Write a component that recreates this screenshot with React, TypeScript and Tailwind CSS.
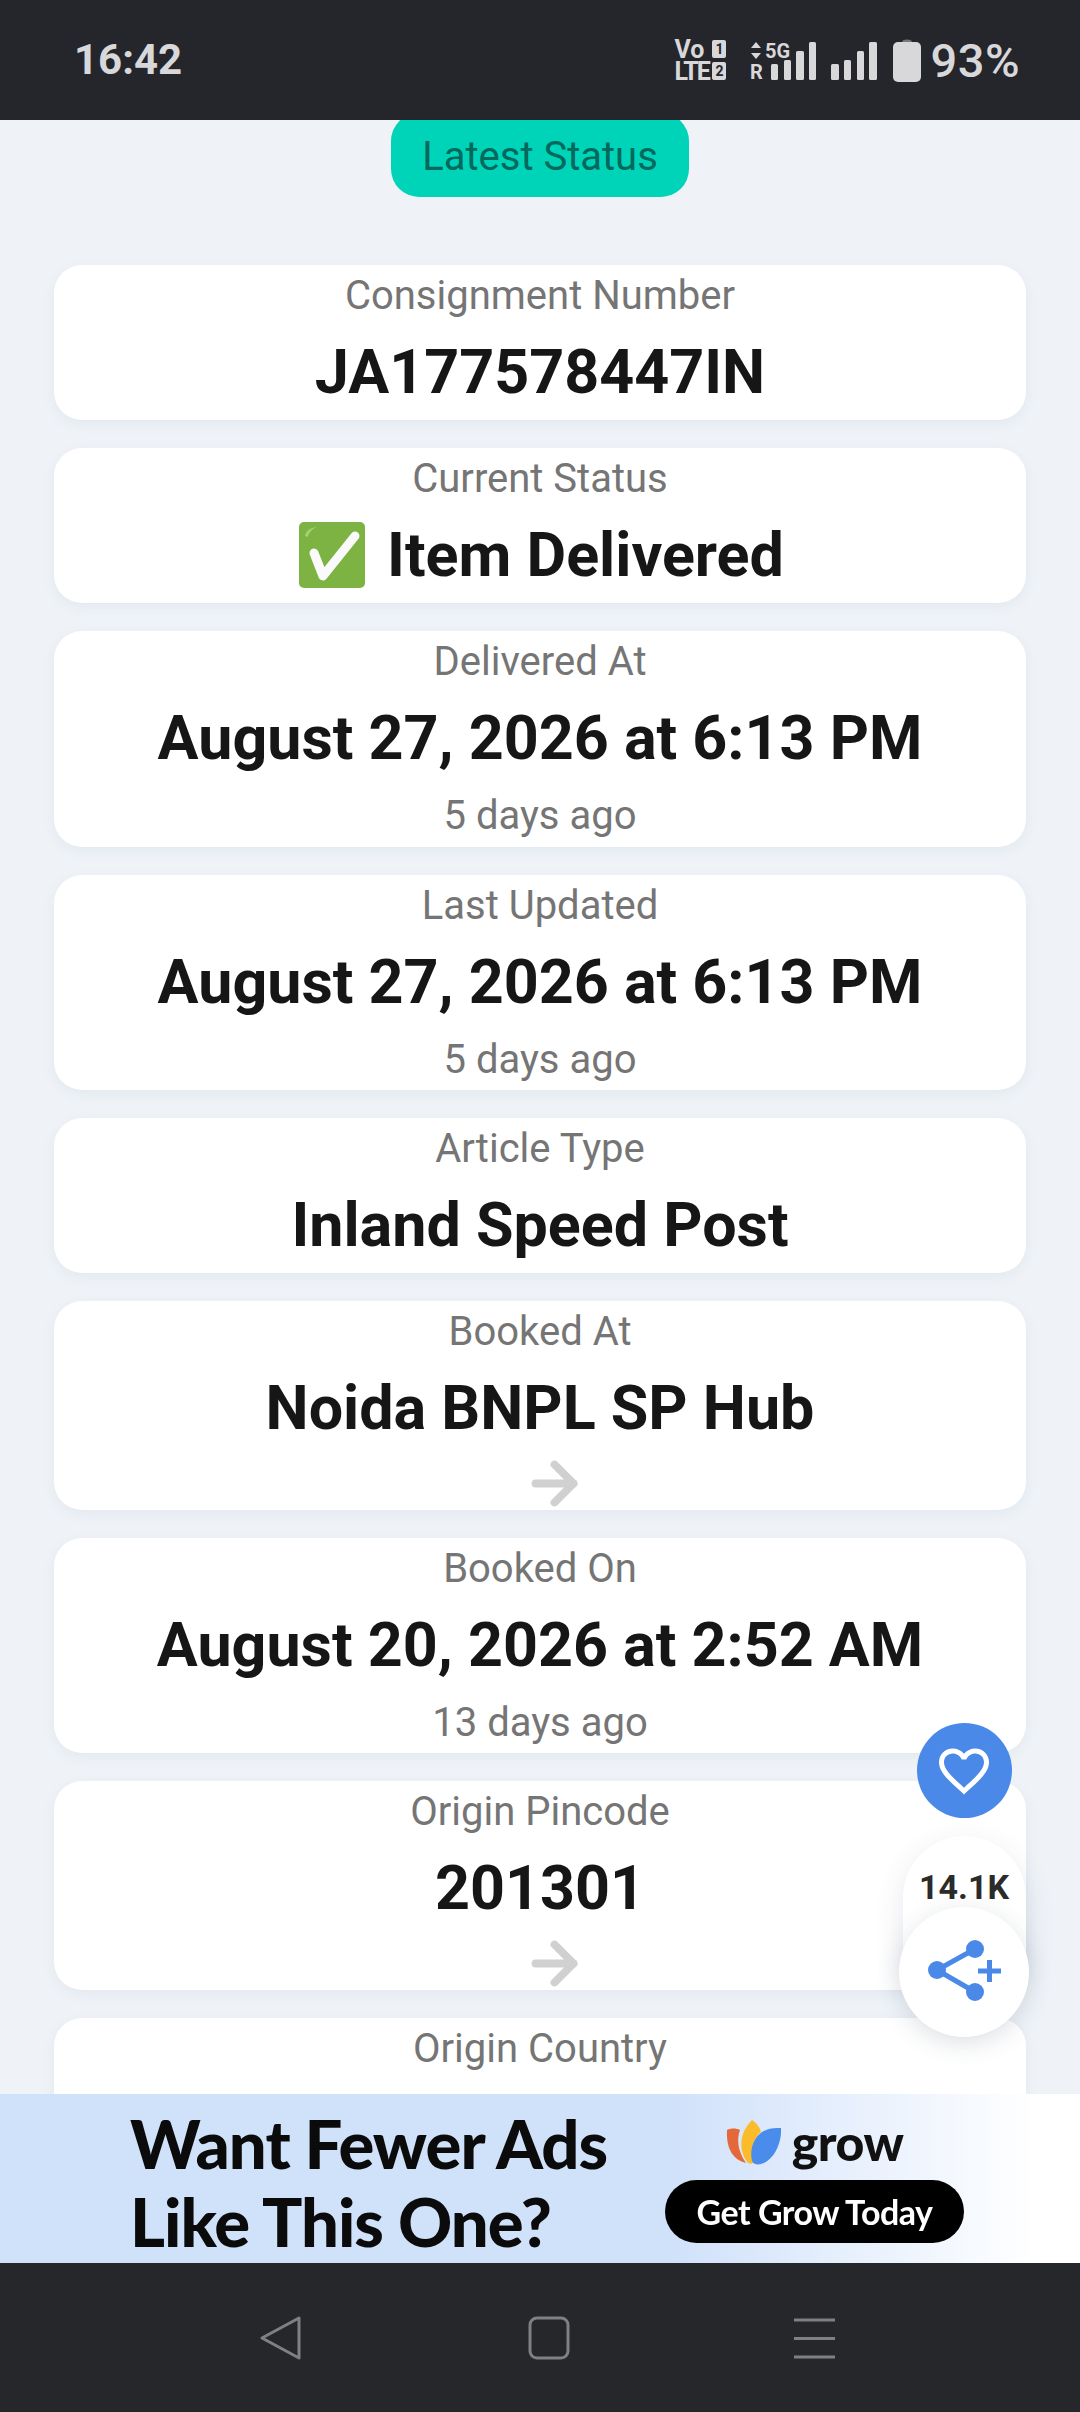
import { ArrowRight } from 'lucide-react';

type Row = { label: string; value?: string; sub?: string; arrow?: boolean; check?: boolean };

const rows: Row[] = [
  { label: 'Consignment Number', value: 'JA177578447IN' },
  { label: 'Current Status', value: 'Item Delivered', check: true },
  { label: 'Delivered At', value: 'August 27, 2026 at 6:13 PM', sub: '5 days ago' },
  { label: 'Last Updated', value: 'August 27, 2026 at 6:13 PM', sub: '5 days ago' },
  { label: 'Article Type', value: 'Inland Speed Post' },
  { label: 'Booked At', value: 'Noida BNPL SP Hub', arrow: true },
  { label: 'Booked On', value: 'August 20, 2026 at 2:52 AM', sub: '13 days ago' },
  { label: 'Origin Pincode', value: '201301', arrow: true },
  { label: 'Origin Country' },
];

function CheckEmoji() {
  return (
    <svg width="66" height="66" viewBox="0 0 66 66" className="ml-[3px] shrink-0">
      <rect width="66" height="66" rx="5" fill="#7cb342" />
      <path d="M6 14c1-5 4-8 12-9-5 2-8 5-9 10z" fill="#a5cf75" />
      <path d="M15 31l9 23L56 14" fill="none" stroke="#fafafa" strokeWidth="9" strokeLinecap="round" strokeLinejoin="round" />
    </svg>
  );
}

function Card({ row }: { row: Row }) {
  return (
    <div className="rounded-[28px] bg-white pt-[9px] text-center shadow-[0_4px_14px_rgba(40,60,90,0.06)]">
      <div className="text-[40px] leading-[44px] text-[#757575]">{row.label}</div>
      <div className="mt-[18px] flex h-[72px] items-center justify-center gap-[22px] text-[61px] font-bold leading-[72px] text-[#161616]">
        {row.check && <CheckEmoji />}
        {row.value}
      </div>
      {row.sub && <div className="mt-[20px] pb-[8.5px] text-[40px] leading-[44px] text-[#757575]">{row.sub}</div>}
      {row.arrow && (
        <div className="flex h-[65.5px] justify-center pl-[29px] pt-[7px] text-[#d0d0d0]">
          <ArrowRight size={65} strokeWidth={2.9} />
        </div>
      )}
      {!row.sub && !row.arrow && <div className="h-3" />}
    </div>
  );
}

function StatusBar() {
  return (
    <div className="flex h-[120px] shrink-0 items-center justify-between bg-[#25262b] pl-[74px] pr-[60px] text-[#d8d8da]">
      <span className="text-[42px] font-bold leading-none">16:42</span>
      <div className="flex items-center">
        <div className="flex w-[52px] flex-col gap-[3px] text-[25px] font-bold leading-[19px]">
          <div className="flex items-center justify-between">
            <span>Vo</span>
            <span className="flex h-[18px] w-[14px] items-center justify-center rounded-[2px] bg-[#d8d8da] text-[14px] text-[#25262b]">1</span>
          </div>
          <div className="flex items-center justify-between">
            <span className="tracking-[-2px]">LTE</span>
            <span className="flex h-[18px] w-[14px] items-center justify-center rounded-[2px] bg-[#d8d8da] text-[14px] text-[#25262b]">2</span>
          </div>
        </div>
        <svg width="127" height="52" viewBox="0 -5 127 52" fill="#d8d8da" className="ml-6">
          <path d="M6 3l5 6H1zM6 20l5-6H1z" />
          <text x="15" y="19" fontSize="20" fontWeight="700" fontFamily="Roboto">5G</text>
          <text x="0" y="40" fontSize="20" fontWeight="700" fontFamily="Roboto">R</text>
          <rect x="21" y="25" width="7" height="16" rx="1.5" />
          <rect x="34" y="21" width="7" height="20" rx="1.5" />
          <rect x="46" y="12" width="8" height="29" rx="1.5" />
          <rect x="59" y="3" width="7" height="38" rx="1.5" />
          <rect x="81" y="25" width="8" height="16" rx="1.5" />
          <rect x="94" y="21" width="7" height="20" rx="1.5" />
          <rect x="107" y="12" width="7" height="29" rx="1.5" />
          <rect x="119" y="3" width="8" height="38" rx="1.5" />
        </svg>
        <svg width="28" height="43" viewBox="0 0 28 43" className="ml-4">
          <path d="M9 3.500c0-2 1.500-3 5-3s5 1 5 3z" fill="#77787b" />
          <rect y="3" width="28" height="40" rx="5" fill="#d8d8da" />
        </svg>
        <span className="ml-[9px] text-[47px] font-medium leading-none tracking-[0.5px]">93%</span>
      </div>
    </div>
  );
}

function Floating() {
  return (
    <div className="absolute left-[899px] top-[1723px] flex w-[130px] flex-col items-center">
      <div className="flex h-[95px] w-[95px] items-center justify-center rounded-full bg-[#4a89e8]">
        <svg width="60" height="60" viewBox="0 0 24 24" fill="#ffffff">
          <path d="M16.5 3c-1.74 0-3.41.81-4.5 2.09C10.91 3.81 9.24 3 7.5 3 4.42 3 2 5.42 2 8.5c0 3.78 3.4 6.86 8.55 11.54L12 21.35l1.45-1.32C18.6 15.36 22 12.28 22 8.5 22 5.42 19.58 3 16.5 3zm-4.4 15.55l-.1.1-.1-.1C7.14 14.24 4 11.39 4 8.5 4 6.5 5.5 5 7.5 5c1.54 0 3.04.99 3.57 2.36h1.87C13.46 5.99 14.96 5 16.5 5c2 0 3.5 1.5 3.5 3.5 0 2.89-3.14 5.74-7.9 10.05z" />
        </svg>
      </div>
      <div className="mt-[18px] flex h-[130px] w-[123px] justify-center rounded-t-full bg-white pt-[29px] text-[34px] font-bold leading-[44px] text-[#2b2b2b] shadow-[0_10px_30px_rgba(40,60,90,0.12)]">
        14.1K
      </div>
      <div className="-mt-[59px] flex h-[130px] w-[130px] items-center justify-center rounded-full bg-white shadow-[0_6px_24px_rgba(40,60,90,0.16)]">
        <svg width="130" height="130" viewBox="0 0 130 130" fill="#4a89e8">
          <path d="M76 42L38 63l38 22" fill="none" stroke="#4a89e8" strokeWidth="5" />
          <circle cx="76" cy="42" r="9" />
          <circle cx="38" cy="63" r="9" />
          <circle cx="76" cy="85" r="9" />
          <path d="M79 61.500h9V53h5v8.500h9v5h-9V75h-5v-8.500h-9z" />
        </svg>
      </div>
    </div>
  );
}

function AdBanner() {
  return (
    <div className="flex h-[169px] shrink-0 bg-[linear-gradient(90deg,#d0e1fa_0%,#d0e1fa_62%,#ffffff_96%)] pl-[130px]">
      <div className="flex w-[535px] flex-col pt-[10px] font-['Lato'] text-[67px] font-black leading-[78px] tracking-[-1px] text-[#0b0b0b] blur-[0.6px]">
        <span>Want Fewer Ads</span>
        <span>Like This One?</span>
      </div>
      <div className="flex w-[299px] flex-col items-center pt-[23px] blur-[0.4px]">
        <div className="flex h-[50px] items-center gap-[11px]">
          <svg width="55" height="45" viewBox="0 0 55 45">
            <path d="M1 10c4-2 9-2 13 0-3 8-3 20 6 33C8 40 0 30 1 10z" fill="#e5683b" />
            <path d="M26 0c5 3 8 8 9 12-7 5-11 18-8 31-1 1-3 1-5 0C13 32 12 14 26 0z" fill="#fbbc2c" />
            <path d="M55 8c1 16-8 33-20 36-4 1-8 0-9-3-3-13 3-27 14-31 5-2 10-2 15-2z" fill="#4a8ceb" />
          </svg>
          <span className="font-['Lato'] text-[50px] font-black leading-none tracking-[-0.5px] text-[#111111]">grow</span>
        </div>
        <div className="mt-[13px] flex h-[63px] w-full items-center justify-center rounded-full bg-black font-['Lato'] text-[34px] font-bold tracking-[-0.5px] text-white">
          Get Grow Today
        </div>
      </div>
    </div>
  );
}

function NavBar() {
  return (
    <div className="flex h-[149px] shrink-0 items-start bg-[#25272a] pt-[52px]">
      <svg width="1080" height="46" viewBox="0 0 1080 46" fill="none" stroke="#7f8083" strokeWidth="3">
        <path d="M299 3v40L262 23z" strokeLinejoin="round" />
        <rect x="530" y="3" width="38" height="40" rx="7" />
        <path d="M794 5h41M794 23.500h41M794 42h41" />
      </svg>
    </div>
  );
}

export default function App() {
  return (
    <div className="relative flex h-[2412px] w-[1080px] flex-col overflow-hidden bg-[#eff3f8] font-['Roboto',sans-serif]">
      <StatusBar />
      <main className="min-h-0 flex-1 overflow-hidden px-[54px]">
        <div className="-mt-[7px] mb-[68px] flex h-[84px] w-[298px] translate-x-[337px] items-center justify-center rounded-[28px] bg-[#00d4b8] pt-1 text-[40px] text-[#00685c]">
          Latest Status
        </div>
        <div className="flex flex-col gap-[28px]">
          {rows.map((row) => (
            <Card key={row.label} row={row} />
          ))}
        </div>
      </main>
      <AdBanner />
      <NavBar />
      <Floating />
    </div>
  );
}
